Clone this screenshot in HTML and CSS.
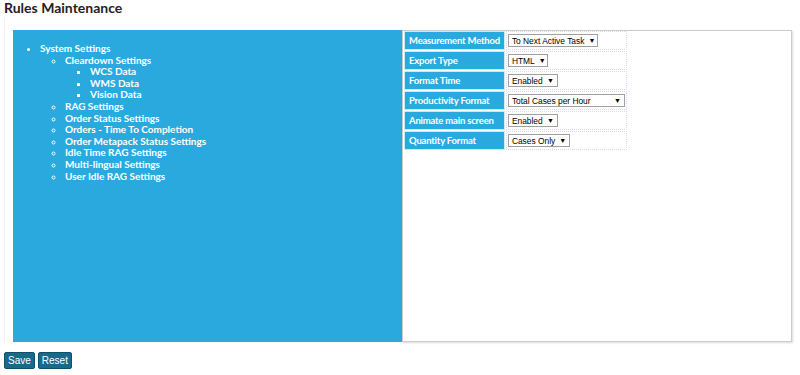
FILE: index.html
```html
<!DOCTYPE html>
<html lang="en">
<head>
    <meta charset="UTF-8">
    <title>Rules Maintenance</title>
    <link rel="stylesheet" href="styles.css">
</head>
<body>
    <h1 class="page-title">Rules Maintenance</h1>
    <div class="content">
        <div class="panels">
            <aside class="tree">
                <ul>
                    <li>System Settings
                        <ul>
                            <li>Cleardown Settings
                                <ul>
                                    <li>WCS Data</li>
                                    <li>WMS Data</li>
                                    <li>Vision Data</li>
                                </ul>
                            </li>
                            <li>RAG Settings</li>
                            <li>Order Status Settings</li>
                            <li>Orders - Time To Completion</li>
                            <li>Order Metapack Status Settings</li>
                            <li>Idle Time RAG Settings</li>
                            <li>Multi-lingual Settings</li>
                            <li>User Idle RAG Settings</li>
                        </ul>
                    </li>
                </ul>
            </aside>
            <section class="rules">
                <table class="rules-table">
                    <tr>
                        <th>Measurement Method</th>
                        <td><span class="select w-90">To Next Active Task<span class="arrow">&#9660;</span></span></td>
                    </tr>
                    <tr>
                        <th>Export Type</th>
                        <td><span class="select w-40">HTML<span class="arrow">&#9660;</span></span></td>
                    </tr>
                    <tr>
                        <th>Format Time</th>
                        <td><span class="select w-50">Enabled<span class="arrow">&#9660;</span></span></td>
                    </tr>
                    <tr>
                        <th>Productivity Format</th>
                        <td><span class="select w-117">Total Cases per Hour<span class="arrow">&#9660;</span></span></td>
                    </tr>
                    <tr>
                        <th>Animate main screen</th>
                        <td><span class="select w-50">Enabled<span class="arrow">&#9660;</span></span></td>
                    </tr>
                    <tr>
                        <th>Quantity Format</th>
                        <td><span class="select w-62">Cases Only<span class="arrow">&#9660;</span></span></td>
                    </tr>
                </table>
            </section>
        </div>
    </div>
    <div class="actions">
        <button class="btn">Save</button>
        <button class="btn">Reset</button>
    </div>
</body>
</html>
```
FILE: styles.css
```css
body {
    margin: 0;
    font-family: Lato, 'Open Sans', sans-serif;
    background-color: #fff;
    color: #222;
}

.page-title {
    margin: 0;
    padding: 0 4px;
    font-size: 14px;
    font-weight: bold;
    line-height: 16px;
    height: 18px;
}

.content {
    margin-left: 4px;
    border-left: 1px solid #f0f0f0;
    padding: 12px 8px 0 8px;
}

.panels {
    display: flex;
    height: 312px;
}

.tree {
    width: 389px;
    background-color: #2aa9df;
    color: #fff;
    font-weight: bold;
    font-size: 10px;
    line-height: 11.6px;
    padding-top: 13px;
    box-sizing: border-box;
}

.tree ul {
    margin: 0;
    padding-left: 27px;
}

.tree ul ul {
    padding-left: 25px;
}

.rules {
    flex: 1;
    background-color: #fff;
    border: 1px solid #ccc;
    box-shadow: 1px 1px 2px rgba(0, 0, 0, 0.15);
}

.rules-table {
    border-spacing: 1px;
    border-collapse: separate;
    margin-top: -1px;
}

.rules-table th {
    background-color: #2aa9df;
    color: #fff;
    font-size: 9.5px;
    letter-spacing: -0.2px;
    font-weight: bold;
    text-align: left;
    height: 17px;
    padding: 0 4px;
    white-space: nowrap;
    border: 1px solid #cde9f6;
}

.rules-table td {
    border: 1px dotted #d8d8f4;
    padding: 0 1px;
    width: 116px;
}

.select {
    display: flex;
    justify-content: space-between;
    align-items: center;
    box-sizing: border-box;
    height: 13px;
    border: 1px solid #a0a0a0;
    background-color: #fff;
    font-family: 'Liberation Sans', Arial, sans-serif;
    font-size: 8.4px;
    color: #000;
    padding: 0 3px;
    white-space: nowrap;
}

.select .arrow {
    font-size: 7px;
    margin-left: 4px;
}

.w-40 { width: 40px; }
.w-50 { width: 50px; }
.w-62 { width: 62px; }
.w-90 { width: 90px; }
.w-117 { width: 117px; }

.actions {
    padding: 10px 4px 0;
    display: flex;
    gap: 3px;
}

.btn {
    background-color: #19698a;
    color: #fff;
    border: 1px solid #10506b;
    border-radius: 2px;
    font-family: 'Liberation Sans', Arial, sans-serif;
    font-size: 10px;
    height: 17px;
    margin: 0;
    padding: 0 3px;
    cursor: pointer;
}
```
